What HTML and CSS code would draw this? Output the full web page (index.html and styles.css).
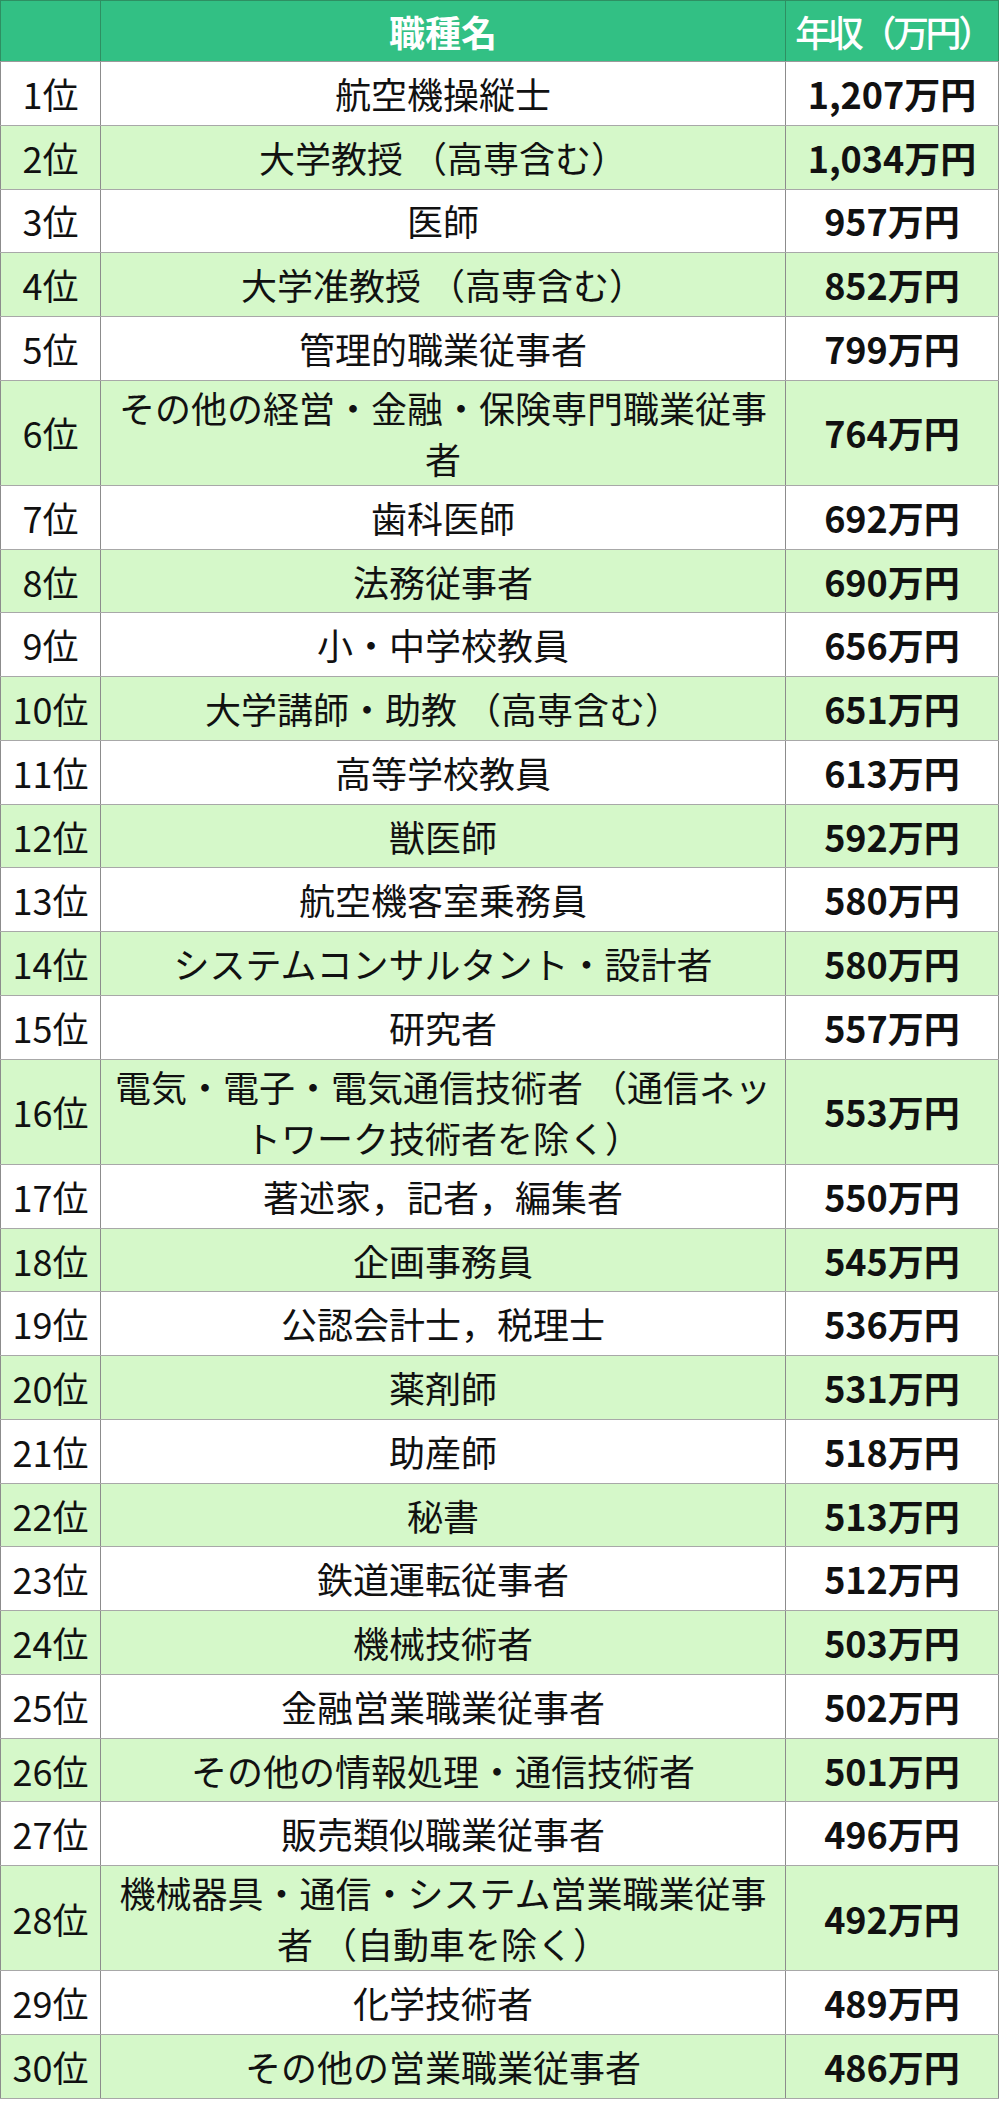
FILE: index.html
```html
<!DOCTYPE html>
<html lang="ja">
<head>
<meta charset="utf-8">
<title>職種別年収ランキング</title>
<link rel="stylesheet" href="styles.css">
</head>
<body>
<table class="ranking">
  <colgroup>
    <col class="col-rank">
    <col class="col-name">
    <col class="col-pay">
  </colgroup>
  <thead>
    <tr>
      <th></th>
      <th class="name-head">職種名</th>
      <th class="pay-head">年収（万円）</th>
    </tr>
  </thead>
  <tbody>
    <tr><td class="rank">1位</td><td class="name">航空機操縦士</td><td class="pay">1,207万円</td></tr>
    <tr><td class="rank">2位</td><td class="name">大学教授 （高専含む）</td><td class="pay">1,034万円</td></tr>
    <tr><td class="rank">3位</td><td class="name">医師</td><td class="pay">957万円</td></tr>
    <tr><td class="rank">4位</td><td class="name">大学准教授 （高専含む）</td><td class="pay">852万円</td></tr>
    <tr><td class="rank">5位</td><td class="name">管理的職業従事者</td><td class="pay">799万円</td></tr>
    <tr><td class="rank">6位</td><td class="name">その他の経営・金融・保険専門職業従事者</td><td class="pay">764万円</td></tr>
    <tr><td class="rank">7位</td><td class="name">歯科医師</td><td class="pay">692万円</td></tr>
    <tr><td class="rank">8位</td><td class="name">法務従事者</td><td class="pay">690万円</td></tr>
    <tr><td class="rank">9位</td><td class="name">小・中学校教員</td><td class="pay">656万円</td></tr>
    <tr><td class="rank">10位</td><td class="name">大学講師・助教 （高専含む）</td><td class="pay">651万円</td></tr>
    <tr><td class="rank">11位</td><td class="name">高等学校教員</td><td class="pay">613万円</td></tr>
    <tr><td class="rank">12位</td><td class="name">獣医師</td><td class="pay">592万円</td></tr>
    <tr><td class="rank">13位</td><td class="name">航空機客室乗務員</td><td class="pay">580万円</td></tr>
    <tr><td class="rank">14位</td><td class="name">システムコンサルタント・設計者</td><td class="pay">580万円</td></tr>
    <tr><td class="rank">15位</td><td class="name">研究者</td><td class="pay">557万円</td></tr>
    <tr><td class="rank">16位</td><td class="name">電気・電子・電気通信技術者 （通信ネットワーク技術者を除く）</td><td class="pay">553万円</td></tr>
    <tr><td class="rank">17位</td><td class="name">著述家，記者，編集者</td><td class="pay">550万円</td></tr>
    <tr><td class="rank">18位</td><td class="name">企画事務員</td><td class="pay">545万円</td></tr>
    <tr><td class="rank">19位</td><td class="name">公認会計士，税理士</td><td class="pay">536万円</td></tr>
    <tr><td class="rank">20位</td><td class="name">薬剤師</td><td class="pay">531万円</td></tr>
    <tr><td class="rank">21位</td><td class="name">助産師</td><td class="pay">518万円</td></tr>
    <tr><td class="rank">22位</td><td class="name">秘書</td><td class="pay">513万円</td></tr>
    <tr><td class="rank">23位</td><td class="name">鉄道運転従事者</td><td class="pay">512万円</td></tr>
    <tr><td class="rank">24位</td><td class="name">機械技術者</td><td class="pay">503万円</td></tr>
    <tr><td class="rank">25位</td><td class="name">金融営業職業従事者</td><td class="pay">502万円</td></tr>
    <tr><td class="rank">26位</td><td class="name">その他の情報処理・通信技術者</td><td class="pay">501万円</td></tr>
    <tr><td class="rank">27位</td><td class="name">販売類似職業従事者</td><td class="pay">496万円</td></tr>
    <tr><td class="rank">28位</td><td class="name">機械器具・通信・システム営業職業従事者 （自動車を除く）</td><td class="pay">492万円</td></tr>
    <tr><td class="rank">29位</td><td class="name">化学技術者</td><td class="pay">489万円</td></tr>
    <tr><td class="rank">30位</td><td class="name">その他の営業職業従事者</td><td class="pay">486万円</td></tr>
  </tbody>
</table>
</body>
</html>
```

FILE: styles.css
```css
html, body {
  margin: 0;
  padding: 0;
  background: #ffffff;
}

body {
  font-family: "Noto Sans CJK JP", "Noto Sans", sans-serif;
  color: #111111;
}

.ranking {
  width: 998px;
  table-layout: fixed;
  border-collapse: collapse;
  border: 1px solid #9a9a9a;
}

.col-rank { width: 100px; }
.col-name { width: 685px; }
.col-pay { width: 213px; }

.ranking th {
  background: #32c084;
  color: #ffffff;
  font-size: 36px;
  font-weight: 700;
  height: 60px;
  padding: 0;
  text-align: center;
  border: 1px solid #2e8f62;
  border-bottom-color: #9a9a9a;
  line-height: 1.4;
  white-space: nowrap;
}

.ranking th.pay-head {
  font-weight: 500;
  letter-spacing: -3.4px;
  padding-left: 2px;
}

.ranking td {
  height: 60.75px;
  padding: 1px 6px;
  font-size: 36px;
  line-height: 1.42;
  text-align: center;
  vertical-align: middle;
  border-top: 1px solid #a8a8a8;
  border-bottom: 1px solid #a8a8a8;
  border-left: 1px solid #8c8c8c;
  border-right: 1px solid #8c8c8c;
}

.ranking td.rank {
  padding: 1px 0;
  white-space: nowrap;
}

.ranking td.pay {
  font-weight: 700;
  white-space: nowrap;
}

.ranking tbody tr:nth-child(even) td {
  background: #d5f8c9;
}
```
